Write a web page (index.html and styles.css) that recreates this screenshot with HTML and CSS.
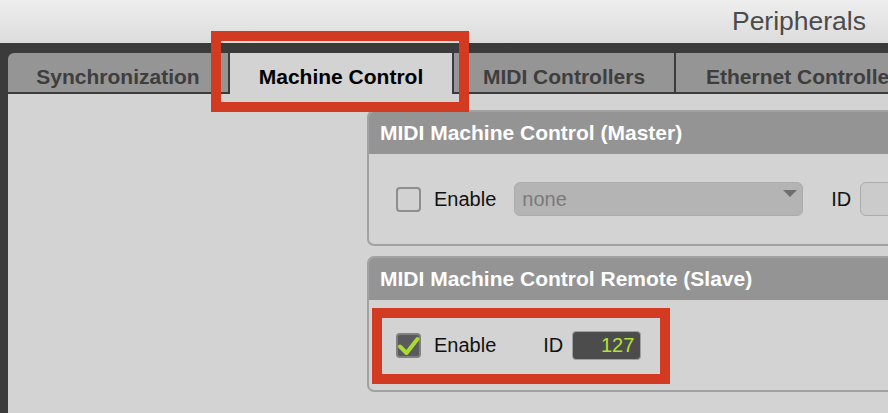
FILE: index.html
```html
<!DOCTYPE html>
<html>
<head>
<meta charset="utf-8">
<link rel="stylesheet" href="styles.css">
</head>
<body>
<div class="titlebar">Peripherals</div>
<div class="window">
  <div class="tabs">
    <div class="tab first">Synchronization</div>
    <div class="tab active">Machine Control</div>
    <div class="tab">MIDI Controllers</div>
    <div class="tab wide">Ethernet Controllers</div>
  </div>
  <div class="content">
    <div class="panel">
      <div class="panel-head">MIDI Machine Control (Master)</div>
      <div class="panel-body">
        <span class="checkbox"></span>
        <span class="label">Enable</span>
        <div class="select"><span class="select-text">none</span><span class="arrow"></span></div>
        <span class="label id-label">ID</span>
        <div class="id-field-off"></div>
      </div>
    </div>
    <div class="panel">
      <div class="panel-head">MIDI Machine Control Remote (Slave)</div>
      <div class="panel-body">
        <span class="checkbox checked"><svg width="25" height="25" viewBox="0 0 25 25"><polyline points="4,13.5 10.5,20 21.5,6" fill="none" stroke="#a8dc35" stroke-width="4" stroke-linejoin="round" stroke-linecap="round"/></svg></span>
        <span class="label">Enable</span>
        <span class="label id-label2">ID</span>
        <div class="id-field">127</div>
      </div>
    </div>
  </div>
</div>
<div class="mark mark-tab"></div>
<div class="mark mark-row"></div>
</body>
</html>
```

FILE: styles.css
```css
html, body {
  margin: 0;
  padding: 0;
}
body {
  width: 888px;
  height: 413px;
  overflow: hidden;
  position: relative;
  font-family: "Liberation Sans", Arial, sans-serif;
  background: #d3d3d3;
  display: flex;
  flex-direction: column;
}
.titlebar {
  height: 43px;
  flex: none;
  background: linear-gradient(#eeeeee, #dcdcdc);
  color: #4b4b4b;
  font-size: 26.5px;
  line-height: 43px;
  text-align: right;
  padding-right: 22px;
}
.window {
  flex: 1;
  background: #3b3b3b;
  padding: 10px 0 0 8px;
  display: flex;
  flex-direction: column;
}
.tabs {
  height: 41px;
  flex: none;
  display: flex;
  gap: 2px;
  align-items: flex-start;
}
.tab {
  flex: none;
  height: 39px;
  box-sizing: border-box;
  width: 220px;
  background: #959595;
  color: #3e3e3e;
  font-weight: bold;
  font-size: 21px;
  padding-top: 8px;
  line-height: 31px;
  text-align: center;
  white-space: nowrap;
  overflow: hidden;
}
.tab.first {
  border-top-left-radius: 6px;
}
.tab.active {
  width: 222px;
  height: 41px;
  background: #d3d3d3;
  color: #000;
}
.tab.wide {
  width: 263px;
}
.content {
  flex: 1;
  background: #d3d3d3;
  padding: 16px 0 0 359px;
  display: flex;
  flex-direction: column;
  gap: 10px;
}
.panel {
  width: 620px;
  border: 2px solid #a2a2a2;
  border-radius: 7px;
  overflow: hidden;
  background: #d3d3d3;
}
.panel-head {
  height: 42px;
  background: #949494;
  color: #fff;
  font-weight: bold;
  font-size: 21px;
  line-height: 42px;
  padding-left: 11px;
}
.panel-body {
  height: 90px;
  display: flex;
  align-items: center;
  padding-left: 27px;
}
.checkbox {
  width: 25px;
  height: 25px;
  box-sizing: border-box;
  border: 2px solid #8e8e8e;
  border-radius: 4px;
  background: #d2d2d2;
  flex: none;
  position: relative;
}
.checkbox.checked {
  background: #5a5a5a;
  border-color: #7f7f7f;
}
.checkbox svg {
  position: absolute;
  left: -2px;
  top: -2px;
}
.label {
  font-size: 20px;
  color: #111;
  margin-left: 13px;
}
.select {
  margin-left: 18px;
  width: 289px;
  height: 34px;
  box-sizing: border-box;
  background: #b4b4b4;
  border: 1px solid #acacac;
  border-radius: 6px;
  display: flex;
  align-items: center;
  justify-content: space-between;
  padding: 0 5px 0 7px;
}
.select-text {
  font-size: 20px;
  color: #7b7b7b;
}
.arrow {
  width: 0;
  height: 0;
  border-left: 7px solid transparent;
  border-right: 7px solid transparent;
  border-top: 7px solid #6e6e6e;
  align-self: flex-start;
  margin-top: 7px;
}
.id-label {
  margin-left: 28px;
}
.id-field-off {
  margin-left: 9px;
  width: 80px;
  height: 34px;
  box-sizing: border-box;
  background: #cbcbcb;
  border: 1px solid #ababab;
  border-radius: 6px;
  flex: none;
}
.id-label2 {
  margin-left: 47px;
}
.id-field {
  margin-left: 9px;
  width: 69px;
  height: 29px;
  box-sizing: border-box;
  background: #4c4c4c;
  border: 1px solid #a0a0a0;
  border-radius: 4px;
  color: #b4e133;
  font-size: 20px;
  line-height: 27px;
  text-align: right;
  padding-right: 6px;
}
.mark {
  position: absolute;
  border: 10px solid #d23a22;
  box-sizing: border-box;
}
.mark-tab {
  left: 211px;
  top: 31px;
  width: 258px;
  height: 81px;
}
.mark-row {
  left: 372px;
  top: 308px;
  width: 298px;
  height: 76px;
}
```
